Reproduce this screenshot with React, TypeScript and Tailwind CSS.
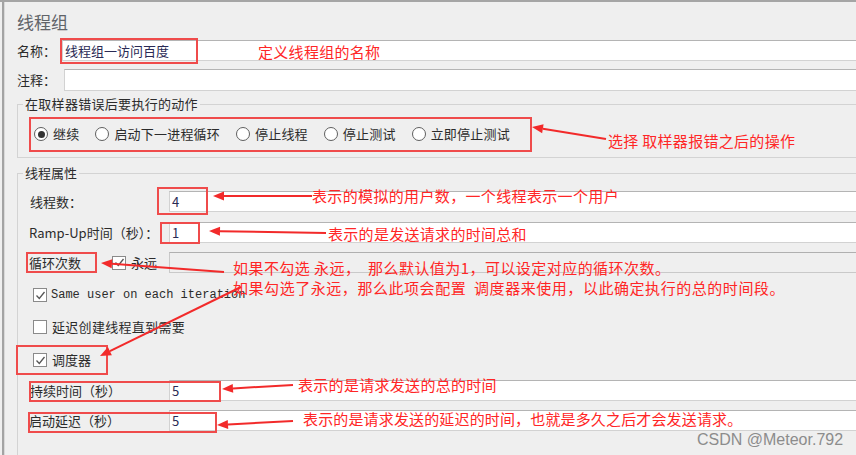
import React from "react";

const CJK = { fontFamily: '"Noto Sans CJK SC", "Noto Sans", sans-serif' };

function Arrow({ x1, y1, x2, y2 }: { x1: number; y1: number; x2: number; y2: number }) {
  const dx = x2 - x1;
  const dy = y2 - y1;
  const L = Math.hypot(dx, dy);
  const ux = dx / L;
  const uy = dy / L;
  const hl = 11;
  const hw = 4.5;
  const bx = x2 - ux * hl;
  const by = y2 - uy * hl;
  const px = -uy;
  const py = ux;
  const pts = `${x2},${y2} ${bx + px * hw},${by + py * hw} ${bx - px * hw},${by - py * hw}`;
  return (
    <g>
      <line x1={x1} y1={y1} x2={bx} y2={by} stroke="#f22a2a" strokeWidth={2} />
      <polygon points={pts} fill="#f22a2a" />
    </g>
  );
}

function Radio({ label, checked }: { label: string; checked?: boolean }) {
  return (
    <div className="flex items-center gap-[5px]">
      <div className="w-[14px] h-[14px] rounded-full border border-[#5f5f5f] bg-white flex items-center justify-center">
        {checked && <div className="w-[7px] h-[7px] rounded-full bg-[#333]" />}
      </div>
      <span className="text-[13px] leading-[16px] text-[#2b2b2b] tracking-[0.2px]">{label}</span>
    </div>
  );
}

function Check({ checked }: { checked?: boolean }) {
  return (
    <div className="w-[14px] h-[14px] border border-[#8a8a8a] bg-white flex items-center justify-center shrink-0">
      {checked && (
        <svg width="11" height="11" viewBox="0 0 11 11">
          <path d="M1.5 5.5 L4.3 8.5 L9.5 2" fill="none" stroke="#555" strokeWidth="1.3" />
        </svg>
      )}
    </div>
  );
}

function Field({ value, disabled }: { value?: string; disabled?: boolean }) {
  return (
    <div
      className={
        disabled
          ? "flex-1 h-full border border-r-0 border-[#c9c9c9] border-t-[#b0b0b0] bg-[#efefef]"
          : "flex-1 h-full border border-r-0 border-[#d2d2d2] border-t-[#b4b4b4] bg-white flex items-center pl-[2px]"
      }
    >
      {value && <span className="text-[13px] leading-[16px] text-[#2a2a55]">{value}</span>}
    </div>
  );
}

export default function App() {
  return (
    <div className="relative w-[856px] h-[455px] overflow-hidden bg-[#efefef] border-t-2 border-[#a5a5a5] pl-[2px]" style={CJK}>
      <div className="h-full border-l-2 border-[#a3a3a3]">
        <div className="h-full border-l border-[#d9d9d9] pl-[12px] text-[#2b2b2b]">
          {/* title */}
          <div className="pt-[8px] h-[32px] text-[17px] leading-[24px] text-[#5f6368]">线程组</div>

          {/* name */}
          <div className="mt-[6px] h-[21px] flex items-center">
            <div className="w-[45px] text-[13px] leading-[16px]">名称：</div>
            <Field value="线程组一访问百度" />
          </div>

          {/* comment */}
          <div className="mt-[8px] h-[22px] flex items-center">
            <div className="w-[47px] text-[13px] leading-[16px]">注释：</div>
            <Field />
          </div>

          {/* group 1 */}
          <fieldset className="mt-[5px] mr-[-14px] border border-[#d3d3d3]">
            <legend className="ml-[5px] px-[2px] text-[13px] leading-[16px] tracking-[0.3px]">在取样器错误后要执行的动作</legend>
            <div className="pt-[12px] pb-[13px] pl-[16px]">
              <div className="h-[20px] flex items-center gap-[16px]">
                <Radio label="继续" checked />
                <Radio label="启动下一进程循环" />
                <Radio label="停止线程" />
                <Radio label="停止测试" />
                <Radio label="立即停止测试" />
              </div>
            </div>
          </fieldset>

          {/* group 2 */}
          <fieldset className="mt-[7px] mr-[-14px] border border-[#d3d3d3]">
            <legend className="ml-[5px] px-[2px] text-[13px] leading-[16px]">线程属性</legend>
            <div className="pb-[40px]">
              <div className="mt-[10px] h-[21px] flex items-center pl-[12px]">
                <div className="w-[139px] text-[13px] leading-[16px]">线程数：</div>
                <Field value="4" />
              </div>
              <div className="mt-[10px] h-[21px] flex items-center pl-[11px]">
                <div className="w-[140px] text-[13px] leading-[16px]">Ramp-Up时间（秒）：</div>
                <Field value="1" />
              </div>
              <div className="mt-[9px] h-[21px] flex items-center pl-[11px]">
                <div className="w-[83px] text-[13px] leading-[16px]">循环次数</div>
                <Check checked />
                <div className="w-[43px] pl-[5px] text-[13px] leading-[16px]">永远</div>
                <Field disabled />
              </div>
              <div className="mt-[14px] h-[16px] flex items-center gap-[4px] pl-[15px]">
                <Check checked />
                <span className="text-[12px] leading-[16px] text-[#2b2b2b]" style={{ fontFamily: '"Liberation Mono", monospace' }}>
                  Same user on each iteration
                </span>
              </div>
              <div className="mt-[16px] h-[16px] flex items-center gap-[5px] pl-[15px]">
                <Check />
                <span className="text-[13px] leading-[16px] tracking-[0.3px]">延迟创建线程直到需要</span>
              </div>
              <div className="mt-[17px] h-[16px] flex items-center gap-[5px] pl-[15px]">
                <Check checked />
                <span className="text-[13px] leading-[16px]">调度器</span>
              </div>
              <div className="mt-[12px] h-[21px] flex items-center pl-[12px]">
                <div className="w-[139px] text-[13px] leading-[16px]">持续时间（秒）</div>
                <Field value="5" />
              </div>
              <div className="mt-[9px] h-[21px] flex items-center pl-[11px]">
                <div className="w-[140px] text-[13px] leading-[16px]">启动延迟（秒）</div>
                <Field value="5" />
              </div>
            </div>
          </fieldset>
        </div>
      </div>

      {/* red boxes */}
      <div className="absolute left-[60px] top-[36px] w-[138px] h-[26px] border-2 border-[#ef4b4b]" />
      <div className="absolute left-[29px] top-[115px] w-[503px] h-[35px] border-2 border-[#ef4b4b]" />
      <div className="absolute left-[157px] top-[185px] w-[51px] h-[28px] border-2 border-[#ef4b4b]" />
      <div className="absolute left-[160px] top-[220px] w-[40px] h-[22px] border-2 border-[#ef4b4b]" />
      <div className="absolute left-[26px] top-[250px] w-[71px] h-[21px] border-2 border-[#ef4b4b]" />
      <div className="absolute left-[16px] top-[343px] w-[92px] h-[30px] border-2 border-[#ef4b4b]" />
      <div className="absolute left-[29px] top-[379px] w-[192px] h-[21px] border-2 border-[#ef4b4b]" />
      <div className="absolute left-[28px] top-[410px] w-[189px] h-[21px] border-2 border-[#ef4b4b]" />

      {/* arrows */}
      <svg className="absolute left-0 top-0 pointer-events-none" width="856" height="455">
        <Arrow x1={606} y1={137} x2={532} y2={125} />
        <Arrow x1={312} y1={194} x2={213} y2={194} />
        <Arrow x1={326} y1={231} x2={209} y2={229} />
        <Arrow x1={224} y1={270} x2={101} y2={261} />
        <Arrow x1={241} y1={285} x2={100} y2={354} />
        <Arrow x1={293} y1={383} x2={222} y2={387} />
        <Arrow x1={293} y1={419} x2={217} y2={423} />
      </svg>

      {/* annotations */}
      <div className="absolute left-[258px] top-[40px] text-[15px] leading-[20px] tracking-[0.3px] text-[#ff2626] whitespace-pre">定义线程组的名称</div>
      <div className="absolute left-[608px] top-[129px] text-[15px] leading-[20px] tracking-[0.3px] text-[#ff2626] whitespace-pre">选择 取样器报错之后的操作</div>
      <div className="absolute left-[312px] top-[184px] text-[15px] leading-[20px] tracking-[0.35px] text-[#ff2626] whitespace-pre">表示的模拟的用户数，一个线程表示一个用户</div>
      <div className="absolute left-[328px] top-[222px] text-[15px] leading-[20px] tracking-[0.3px] text-[#ff2626] whitespace-pre">表示的是发送请求的时间总和</div>
      <div className="absolute left-[233px] top-[256px] text-[15px] leading-[20px] tracking-[0.45px] text-[#ff2626] whitespace-pre">如果不勾选 永远，  那么默认值为1，可以设定对应的循环次数。</div>
      <div className="absolute left-[233px] top-[276px] text-[15px] leading-[20px] tracking-[0.55px] text-[#ff2626] whitespace-pre">如果勾选了永远，那么此项会配置  调度器来使用，以此确定执行的总的时间段。</div>
      <div className="absolute left-[298px] top-[373px] text-[15px] leading-[20px] tracking-[0.3px] text-[#ff2626] whitespace-pre">表示的是请求发送的总的时间</div>
      <div className="absolute left-[303px] top-[407px] text-[15px] leading-[20px] tracking-[0.15px] text-[#ff2626] whitespace-pre">表示的是请求发送的延迟的时间，也就是多久之后才会发送请求。</div>

      <div
        className="absolute left-[697px] top-[428px] text-[16px] leading-[20px] text-[#8c8c8c] whitespace-pre"
        style={{ fontFamily: '"Liberation Sans", Arial, sans-serif' }}
      >
        CSDN @Meteor.792
      </div>
    </div>
  );
}
